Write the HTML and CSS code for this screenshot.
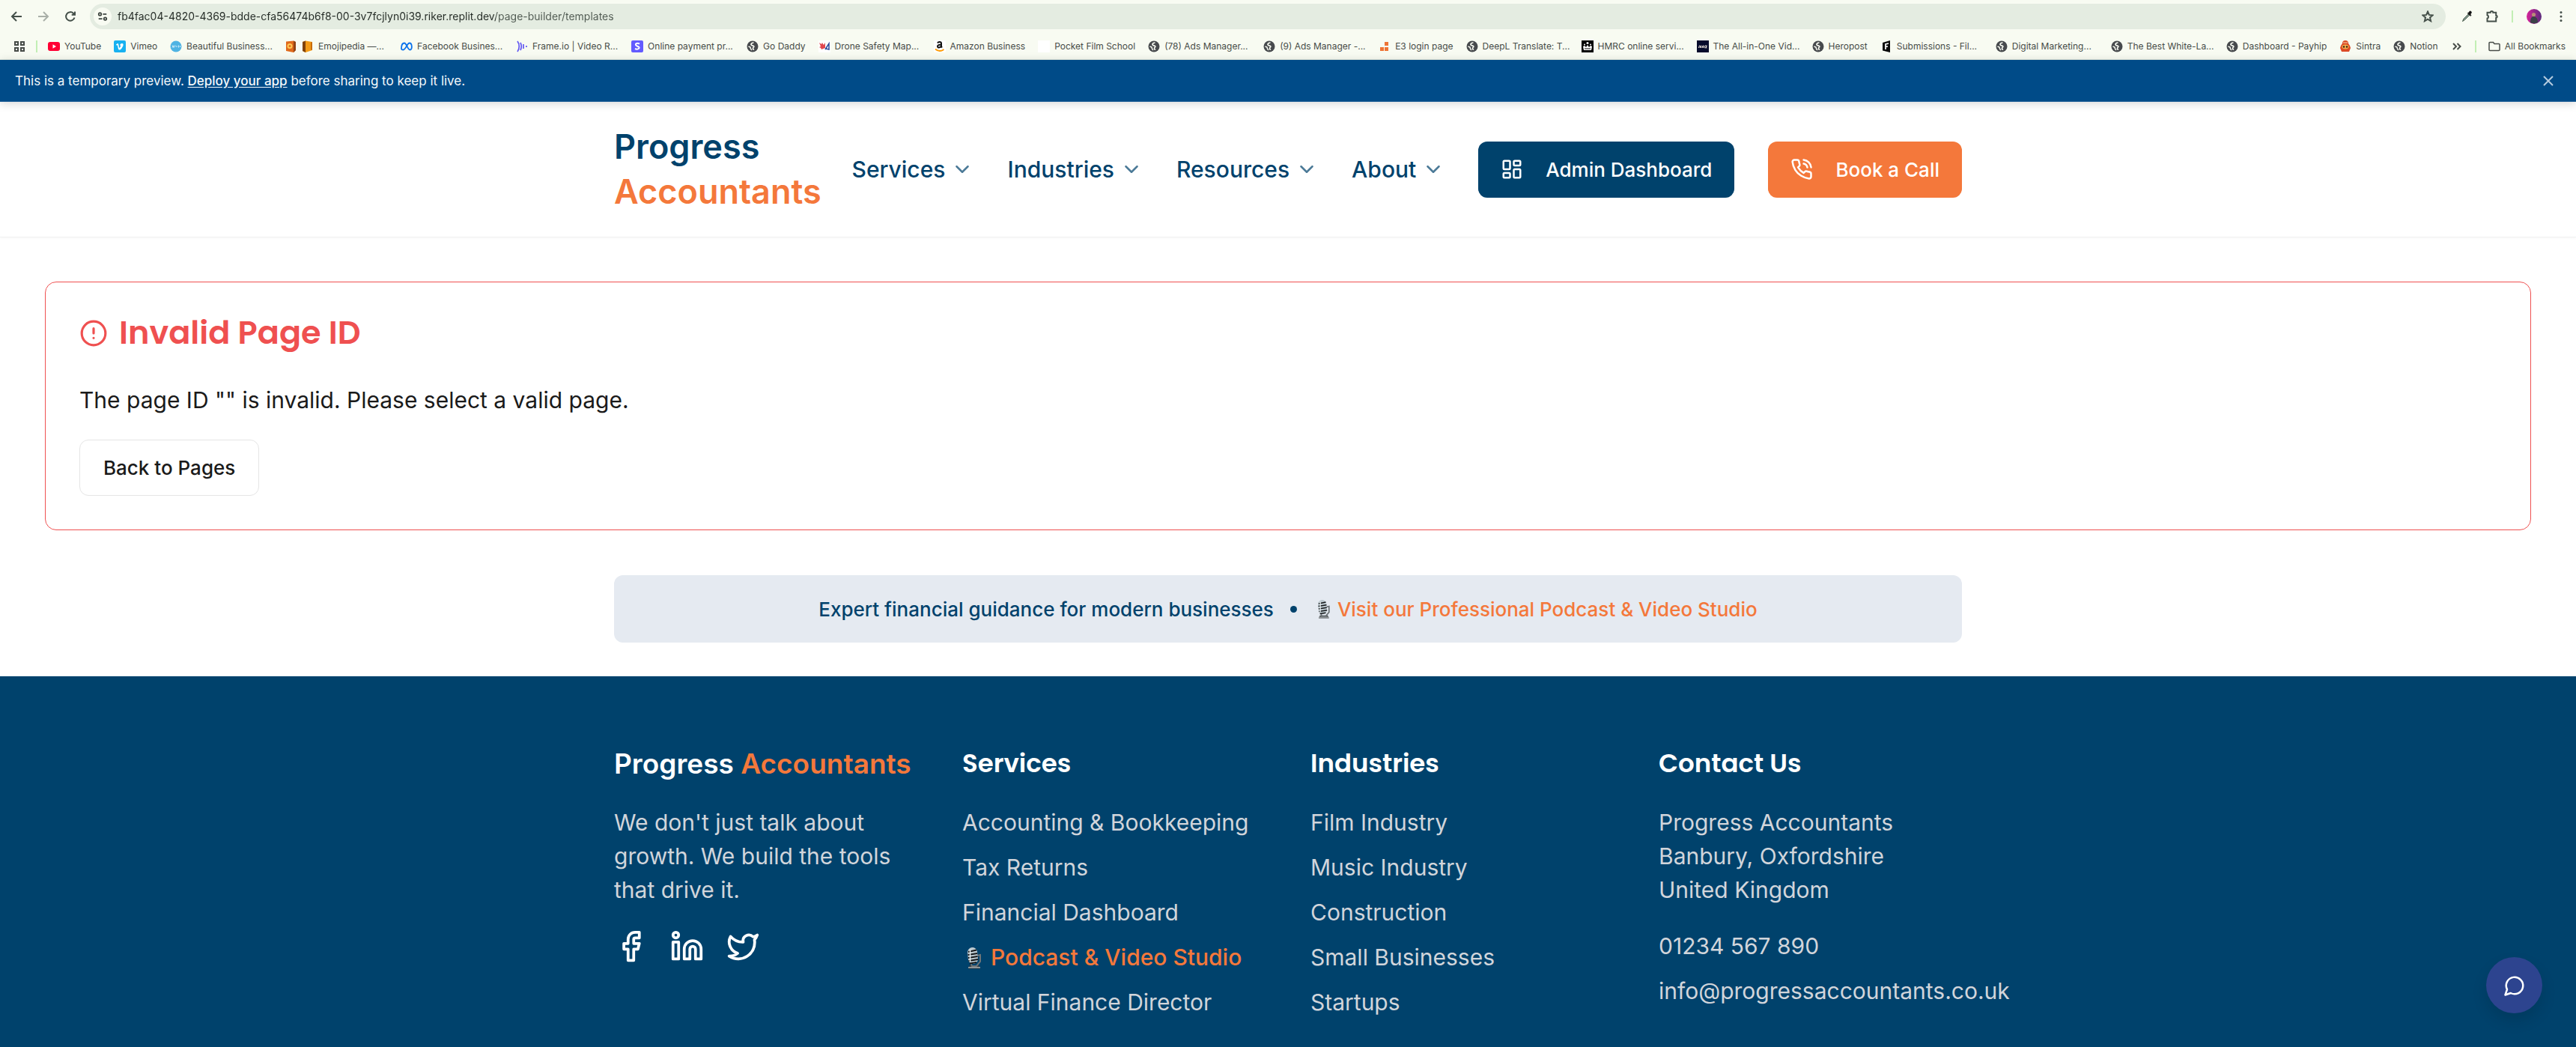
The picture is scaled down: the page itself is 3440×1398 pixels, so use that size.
FILE: index.html
```html
<!DOCTYPE html>
<html lang="en">
<head>
<meta charset="utf-8">
<title>Progress Accountants</title>
<link rel="stylesheet" href="styles.css">
</head>
<body>
<svg class="defs" aria-hidden="true">
  <symbol id="globe" viewBox="0 0 16 16"><circle cx="8" cy="8" r="7.5" fill="#474a4d"/><path d="M9.500 3C7.500 3 5.800 4 6 5.600s3.600.8 3.800 2.200-1.300 1.300-1.300 2.600.5 2 1.500 1.400" fill="none" stroke="#f8fbf2" stroke-width="1.700"/><path d="M2.500 8l2.500 1 .6 2.500L7 13" fill="none" stroke="#f8fbf2" stroke-width="1.500"/></symbol>
  <symbol id="chevron" viewBox="0 0 24 24"><path d="m6 9 6 6 6-6"/></symbol>
  <symbol id="mic" viewBox="0 0 30 30"><path d="M10 25h12l2 4.500H8z" fill="#3b3f42"/><path d="M8 27.800h16" stroke="#a8adb0" stroke-width="1.500"/><path d="M20 12l4-1v9l-5 6h-6l-2-5" fill="none" stroke="#6d7478" stroke-width="2"/><rect x="7.500" y="1" width="13" height="22" rx="6.500" transform="rotate(-6 14 12)" fill="#bcc9d0"/><path d="M8 7l11-2.500M7.600 11l12.500-2M8 15l12.500-2M8.500 19l12.500-2M10 22.500l9-1.500" stroke="#16191b" stroke-width="1.800"/><path d="M10.500 4v16" stroke="#eef4f6" stroke-width="1.500"/></symbol>
</svg>

<div class="browser">
  <div class="toolbar">
    <button class="tool" aria-label="Back"><svg viewBox="0 0 16 16"><path d="M15 8H2M8 2L2 8l6 6"/></svg></button>
    <button class="tool faded" aria-label="Forward"><svg viewBox="0 0 16 16"><path d="M1 8h13M8 2l6 6-6 6"/></svg></button>
    <button class="tool" aria-label="Reload"><svg viewBox="0 0 16 16"><path d="M13.500 9.500A5.800 5.800 0 1 1 12 3.800L13.500 5.300M14 1.500v4.300H9.700"/></svg></button>
    <div class="address">
      <button class="site" aria-label="Site information"><svg viewBox="0 0 16 16"><circle cx="4" cy="4.500" r="2"/><path d="M8.500 4.500H14M2 11.500h5.500"/><circle cx="12" cy="11.500" r="2"/></svg></button>
      <input class="url" aria-label="Address" value="fb4fac04-4820-4369-bdde-cfa56474b6f8-00-3v7fcjlyn0i39.riker.replit.dev/page-builder/templates">
      <button class="tool" aria-label="Bookmark this page"><svg viewBox="0 0 16 16"><path d="M8 1.500l1.900 4.400 4.700.4-3.600 3.100 1.100 4.700L8 11.600l-4.100 2.500L5 9.400 1.400 6.300l4.700-.4z"/></svg></button>
    </div>
    <div class="actions">
      <button class="tool" aria-label="Colour picker"><svg viewBox="0 0 16 16"><path d="M2.500 14.500L4 11l6-6 1.500 1.500-6 6z" fill="#8aa197" stroke="#4c5d4e" stroke-width="1"/><path d="M9 3.500l4 4 1-1-1-1.500 1.500-2a1.800 1.800 0 0 0-2.500-2L10.500 3z" fill="#111" stroke="#111" stroke-width=".5"/></svg></button>
      <button class="tool" aria-label="Extensions"><svg viewBox="0 0 16 16"><path d="M1.500 2.800h4.200a1.800 1.800 0 0 1 3.600 0h3.900v4a1.500 1.500 0 0 1 0 3v4.700H1.500v-4a2.200 2.200 0 0 0 0-4.200z"/></svg></button>
      <span class="rule"></span>
      <button class="tool" aria-label="Profile"><svg class="avatar" viewBox="0 0 20 20"><defs><linearGradient id="av" x1="0" x2="1"><stop offset="0" stop-color="#d6249a"/><stop offset="1" stop-color="#5a2a7c"/></linearGradient></defs><circle cx="10" cy="10" r="10" fill="url(#av)" stroke="none"/><path d="M5 18c0-6 2-8 4.500-8s5.500 2 5.500 7.800a10 10 0 0 1-10 .2z" fill="#3b4148" stroke="none"/><circle cx="9.500" cy="7.500" r="2.600" fill="#b98a78" stroke="none"/></svg></button>
      <button class="tool" aria-label="Menu"><svg viewBox="0 0 16 16"><g fill="#45504a" stroke="none"><circle cx="8" cy="2.500" r="1.500"/><circle cx="8" cy="8" r="1.500"/><circle cx="8" cy="13.500" r="1.500"/></g></svg></button>
    </div>
  </div>
  <nav class="bookmarks" aria-label="Bookmarks">
    <button class="apps" aria-label="Apps"><svg viewBox="0 0 16 16"><path d="M2 2h4v4H2zM10 2h4v4h-4zM2 10h4v4H2zM10 10h4v4h-4z"/></svg></button>
    <span class="rule"></span>
    <div class="marks">
      <a href="#"><svg viewBox="0 0 16 16"><rect y="2" width="16" height="12" rx="3" fill="#ff0033"/><path d="M6.500 5.300v5.400L11 8z" fill="#fff"/></svg>YouTube</a>
      <a href="#"><svg viewBox="0 0 16 16"><rect width="16" height="16" rx="2" fill="#17b1f0"/><path d="M3 5.500l2-1.500c1.500 0 1.300 2 2 5.200.5 1.500 1 .5 2-1.500.4-1.200-.2-1.400-1-1.200.5-2 2-2.700 3.200-2.500 2.500.5 1.200 4-.5 6.200-1.500 2-3.500 3.300-4.500 1.500C5.500 10 5.300 6.500 4.500 6.300l-1 .3z" fill="#fff"/></svg>Vimeo</a>
      <a href="#" class="wide"><svg viewBox="0 0 16 16"><circle cx="8" cy="8" r="7.500" fill="#4fb3e3"/><path d="M3 6.500l2 3 2-3M7.500 8h2.500M3 9.500l2-3M11.500 6.500v3M13.500 7v2" stroke="#d5eefa" fill="none"/></svg>Beautiful Business...</a>
      <a href="#" class="wide"><svg viewBox="0 0 16 16"><path d="M1 1.500L11 .5l3 1.500v11l-3 3-10-2z" fill="#e06a1c"/><path d="M11 .5l3 1.500v11l-3 3z" fill="#934414"/><circle cx="6" cy="7.500" r="3.500" fill="#ffca55"/><circle cx="6" cy="7.500" r="1.500" fill="#e06a1c"/></svg><svg viewBox="0 0 16 16"><path d="M1 2l4-1.500 9 1.500v11l-9 3-4-2z" fill="#f39a16"/><path d="M1 2l4-1.500V16l-4-2z" fill="#80420a"/><path d="M12 2.500v10l2 .5V2z" fill="#c76b0b"/></svg>Emojipedia —...</a>
      <a href="#" class="wide"><svg viewBox="0 0 16 16"><path d="M1 11C1 6 3 3.500 5 3.500c3 0 4 9 7.500 9 3.500 0 3-9-.7-9C8.500 3.500 7 12.500 3.500 12.500 2 12.500 1 12 1 11z" fill="none" stroke="#0a72ec" stroke-width="1.800"/></svg>Facebook Busines...</a>
      <a href="#" class="wide"><svg viewBox="0 0 16 16"><path d="M2 1c3 4 3 10 0 14M6 3c1.500 3 1.500 7 0 10M10 5v6M14 7v2" fill="none" stroke="#6257f2" stroke-width="1.700"/></svg>Frame.io | Video R...</a>
      <a href="#" class="wide"><svg viewBox="0 0 16 16"><rect width="16" height="16" rx="2" fill="#635bff"/><path d="M11 4.500C8 3 5.500 4 6 6s5 1.500 4.600 4C10 12 7 12 5 11" fill="none" stroke="#fff" stroke-width="2"/></svg>Online payment pr...</a>
      <a href="#"><svg><use href="#globe"/></svg>Go Daddy</a>
      <a href="#" class="wide"><svg viewBox="0 0 16 16"><path d="M0 0h16v16H0z" fill="#fff"/><path d="M1 3l3 2 1-2 2 3 2-3v7l-5 2-1-2-2-1 2-1z" fill="#e0474f"/><path d="M9 12l5-8v8l-4-1" fill="none" stroke="#28499c" stroke-width="1.500"/></svg>Drone Safety Map...</a>
      <a href="#"><svg viewBox="0 0 16 16"><rect width="16" height="16" rx="2" fill="#fff"/><path d="M5 3.500C6 1.500 10 1.500 10 4v4l1 1.500M10 5.500c-3 0-5 .5-5 2.500s3.500 2 5-.5" fill="none" stroke="#111" stroke-width="2"/><path d="M2 11.500c4 3.500 8 3 11.500.5" fill="none" stroke="#ff9900" stroke-width="1.800"/></svg>Amazon Business</a>
      <a href="#"><svg viewBox="0 0 16 16"><path d="M0 0h16v16H0z" fill="#fff"/></svg>Pocket Film School</a>
      <a href="#" class="wide"><svg><use href="#globe"/></svg>(78) Ads Manager...</a>
      <a href="#" class="wide"><svg><use href="#globe"/></svg>(9) Ads Manager -...</a>
      <a href="#"><svg viewBox="0 0 16 16"><path d="M8 2h5v5H8zM2 9h5v5H2zM8 9h5v5H8z" fill="#ee7435"/></svg>E3 login page</a>
      <a href="#" class="wide"><svg><use href="#globe"/></svg>DeepL Translate: T...</a>
      <a href="#" class="wide"><svg viewBox="0 0 16 16"><path d="M0 0h16v16H0z"/><path d="M3 13l-1-5 2-1 2 2 2-3 2 3 2-2 2 1-1 5z" fill="#fff"/><circle cx="8" cy="3.500" r="1.500" fill="#fff"/><circle cx="4" cy="5.500" r="1" fill="#fff"/><circle cx="12" cy="5.500" r="1" fill="#fff"/><path d="M4 11h8" stroke="#000"/></svg>HMRC online servi...</a>
      <a href="#" class="wide"><svg viewBox="0 0 16 16"><path d="M0 0h16v16H0z" fill="#070b2b"/><path d="M2.500 10L3.500 6.500M4 10l1-3 1 .3L5.500 10M7 10l1-3h1l-.5 3M12.500 7h-1.500l-1 1.500.3 1.300H12l1-3-.6 3.200h1" fill="none" stroke="#e5dcd5"/></svg>The All-in-One Vid...</a>
      <a href="#"><svg><use href="#globe"/></svg>Heropost</a>
      <a href="#" class="wide"><svg viewBox="0 0 16 16"><path d="M3 3l10-3v16L3 13.500z" fill="#0a0a0a"/><path d="M7 12V5l4-1M7 8.500l3-.5" fill="none" stroke="#fff" stroke-width="1.700"/></svg>Submissions - Fil...</a>
      <a href="#" class="wide"><svg><use href="#globe"/></svg>Digital Marketing...</a>
      <a href="#" class="wide"><svg><use href="#globe"/></svg>The Best White-La...</a>
      <a href="#"><svg><use href="#globe"/></svg>Dashboard - Payhip</a>
      <a href="#"><svg viewBox="0 0 16 16"><path d="M4 4a4 4 0 0 1 8 0l2 3 1 3-2 5H3L1 10l1-3z" fill="#dc4a25"/><path d="M5 3h6" stroke="#f6d9b0"/><ellipse cx="8" cy="8.500" rx="4.500" ry="3" fill="#f2ae4c"/><circle cx="6" cy="8.500" r="1.200" fill="#3a1b10"/><circle cx="10" cy="8.500" r="1.200" fill="#3a1b10"/></svg>Sintra</a>
      <a href="#"><svg><use href="#globe"/></svg>Notion</a>
    </div>
    <button class="more" aria-label="More bookmarks"><svg viewBox="0 0 16 16"><path d="M3 4l4 4-4 4M8.500 4l4 4-4 4"/></svg></button>
    <span class="rule"></span>
    <a href="#" class="all"><svg viewBox="0 0 16 16"><path d="M1 3.500a1 1 0 0 1 1-1h4.500l1.500 2h6a1 1 0 0 1 1 1v7a1 1 0 0 1-1 1H2a1 1 0 0 1-1-1z" fill="none" stroke="#474c48" stroke-width="1.500"/></svg>All Bookmarks</a>
  </nav>
</div>

<div class="preview">
  <p>This is a temporary preview. <a href="#">Deploy your app</a> before sharing to keep it live.</p>
  <button aria-label="Dismiss"><svg viewBox="0 0 24 24"><path d="M6 6l12 12M18 6L6 18"/></svg></button>
</div>

<header class="header">
  <div class="container header-row">
    <a href="#" class="logo">Progress <span>Accountants</span></a>
    <nav class="menu">
      <button class="menu-item">Services <svg class="icon"><use href="#chevron"/></svg></button>
      <button class="menu-item">Industries <svg class="icon"><use href="#chevron"/></svg></button>
      <button class="menu-item">Resources <svg class="icon"><use href="#chevron"/></svg></button>
      <button class="menu-item">About <svg class="icon"><use href="#chevron"/></svg></button>
      <a href="#" class="btn navy"><svg class="icon" viewBox="0 0 24 24"><rect x="3" y="3" width="7" height="9" rx="1"/><rect x="14" y="3" width="7" height="5" rx="1"/><rect x="14" y="12" width="7" height="9" rx="1"/><rect x="3" y="16" width="7" height="5" rx="1"/></svg>Admin Dashboard</a>
      <a href="#" class="btn orange"><svg class="icon" viewBox="0 0 24 24"><path d="M22 16.920v3a2 2 0 0 1-2.180 2 19.790 19.790 0 0 1-8.630-3.070 19.500 19.500 0 0 1-6-6 19.790 19.790 0 0 1-3.070-8.670A2 2 0 0 1 4.110 2h3a2 2 0 0 1 2 1.720 12.840 12.840 0 0 0 .7 2.810 2 2 0 0 1-.45 2.110L8.090 9.910a16 16 0 0 0 6 6l1.270-1.270a2 2 0 0 1 2.110-.45 12.840 12.840 0 0 0 2.810.7A2 2 0 0 1 22 16.920z"/><path d="M14.050 2a9 9 0 0 1 8 7.940"/><path d="M14.050 6A5 5 0 0 1 18 10"/></svg>Book a Call</a>
    </nav>
  </div>
</header>

<main class="main">
  <section class="card">
    <h1><svg viewBox="0 0 24 24"><circle cx="12" cy="12" r="10"/><path d="M12 8v4M12 16h.01"/></svg>Invalid Page ID</h1>
    <p>The page ID "" is invalid. Please select a valid page.</p>
    <button class="back">Back to Pages</button>
  </section>
</main>

<div class="container guide">
  <span>Expert financial guidance for modern businesses</span>
  <span class="dot"></span>
  <a href="#"><svg class="mic"><use href="#mic"/></svg>Visit our Professional Podcast &amp; Video Studio</a>
</div>

<footer class="footer">
  <div class="container columns">
    <div>
      <div class="brand">Progress <span>Accountants</span></div>
      <p>We don't just talk about growth. We build the tools that drive it.</p>
      <div class="social">
        <a href="#" aria-label="Facebook"><svg viewBox="0 0 24 24"><path d="M18 2h-3a5 5 0 0 0-5 5v3H7v4h3v8h4v-8h3l1-4h-4V7a1 1 0 0 1 1-1h3z"/></svg></a>
        <a href="#" aria-label="LinkedIn"><svg viewBox="0 0 24 24"><path d="M16 8a6 6 0 0 1 6 6v7h-4v-7a2 2 0 0 0-2-2 2 2 0 0 0-2 2v7h-4v-7a6 6 0 0 1 6-6z"/><rect width="4" height="12" x="2" y="9"/><circle cx="4" cy="4" r="2"/></svg></a>
        <a href="#" aria-label="Twitter"><svg viewBox="0 0 24 24"><path d="M22 4s-.7 2.100-2 3.400c1.600 10-9.400 17.300-18 11.600 2.200.1 4.400-.6 6-2C3 15.500.5 9.600 3 5c2.200 2.600 5.600 4.100 9 4-.9-4.200 4-6.600 7-3.800 1.100 0 3-1.200 3-1.200z"/></svg></a>
      </div>
    </div>
    <div>
      <h2>Services</h2>
      <ul>
        <li><a href="#">Accounting &amp; Bookkeeping</a></li>
        <li><a href="#">Tax Returns</a></li>
        <li><a href="#">Financial Dashboard</a></li>
        <li><a href="#" class="hot"><svg class="mic big"><use href="#mic"/></svg>Podcast &amp; Video Studio</a></li>
        <li><a href="#">Virtual Finance Director</a></li>
      </ul>
    </div>
    <div>
      <h2>Industries</h2>
      <ul>
        <li><a href="#">Film Industry</a></li>
        <li><a href="#">Music Industry</a></li>
        <li><a href="#">Construction</a></li>
        <li><a href="#">Small Businesses</a></li>
        <li><a href="#">Startups</a></li>
      </ul>
    </div>
    <div>
      <h2>Contact Us</h2>
      <address>
        <p>Progress Accountants<br>Banbury, Oxfordshire<br>United Kingdom</p>
        <a href="#" class="phone">01234 567 890</a>
        <a href="#">info@progressaccountants.co.uk</a>
      </address>
    </div>
  </div>
</footer>

<button class="chat" aria-label="Open chat"><svg class="icon" viewBox="0 0 24 24"><path d="M7.900 20A9 9 0 1 0 4 16.100L2 22Z"/></svg></button>
</body>
</html>
```

FILE: styles.css
```css
:root {
  --navy: #00426c;
  --orange: #f4783b;
  --green: #c2efb4;
}

* { box-sizing: border-box; }

body {
  margin: 0;
  min-height: 100vh;
  display: flex;
  flex-direction: column;
  background: #fff;
  color: #1a1a1a;
  font: 30px/45px Inter, "Liberation Sans", sans-serif;
}

h1, h2, p, ul { margin: 0; padding: 0; }
ul { list-style: none; }
a { color: inherit; text-decoration: none; }
button { margin: 0; padding: 0; border: 0; background: none; color: inherit; font: inherit; }
svg { display: block; flex: none; }
.defs { position: absolute; width: 0; height: 0; }

.icon {
  width: 30px;
  height: 30px;
  fill: none;
  stroke: currentColor;
  stroke-width: 2;
  stroke-linecap: round;
  stroke-linejoin: round;
}

/* Browser chrome */
.browser {
  background: #f8fbf2;
  border-bottom: 1px solid #dfe6db;
  color: #474c48;
  font-size: 12px;
  line-height: 16px;
}
.toolbar {
  display: flex;
  align-items: center;
  height: 44px;
  padding: 0 12px 0 14px;
}
.tool svg {
  width: 16px;
  height: 16px;
  fill: none;
  stroke: #45504a;
  stroke-width: 2;
}
.toolbar > .tool { margin-right: 20px; }
.toolbar > .faded svg { stroke: #a9afa8; }
.address {
  flex: 1;
  display: flex;
  align-items: center;
  height: 34px;
  margin-left: -2px;
  padding: 0 16px 0 5px;
  border-radius: 17px;
  background: #e4ece1;
}
.site {
  display: grid;
  place-items: center;
  width: 24px;
  height: 24px;
  border-radius: 50%;
  background: #f8fbf2;
}
.site svg { width: 14px; height: 14px; fill: none; stroke: #3d4540; stroke-width: 2; }
.url {
  flex: 1;
  min-width: 0;
  margin-left: 8px;
  padding: 0;
  border: 0;
  outline: 0;
  font: 14px/20px Inter, sans-serif;
  color: transparent;
  background: linear-gradient(90deg, #232a25 505px, #505a52 505px);
  -webkit-background-clip: text;
  background-clip: text;
}
.actions { display: flex; align-items: center; gap: 18px; margin-left: 20px; }
.rule { width: 2px; height: 16px; background: var(--green); }
.tool .avatar { width: 20px; height: 20px; }

.bookmarks {
  display: flex;
  align-items: center;
  height: 35px;
  padding: 0 14px 0 18px;
}
.apps { margin-right: 14px; }
.apps svg, .more svg { width: 16px; height: 16px; fill: none; stroke: #474c48; stroke-width: 2; }
.marks { flex: 1; display: flex; gap: 17px; margin-left: 14px; }
.marks a, .all { display: flex; align-items: center; gap: 6px; white-space: nowrap; }
.marks svg, .all svg { width: 16px; height: 16px; }
.marks .wide { width: 137px; }
.more { margin-right: 16px; }
.all { margin-left: 16px; }

/* Preview banner */
.preview {
  position: relative;
  display: flex;
  align-items: center;
  justify-content: space-between;
  height: 56px;
  padding: 0 25px 0 20px;
  border-bottom: 1px solid #1f5f97;
  background: #004b88;
  box-shadow: 0 2px 12px rgba(0, 0, 0, .16);
  color: #f4f8fb;
  font-size: 17px;
  line-height: 24px;
}
.preview a { font-weight: 500; text-decoration: underline; text-underline-offset: 2px; }
.preview svg { width: 24px; height: 24px; stroke: #b5cbdf; stroke-width: 2; }

/* Site header */
.container { width: calc(100% - 120px); max-width: 1800px; margin: 0 auto; }
.header { padding: 30px 0; border-bottom: 1px solid #f0f1f2; box-shadow: 0 1px 3px rgba(0, 0, 0, .04); }
.header-row { display: flex; align-items: center; justify-content: space-between; }
.logo {
  display: flex;
  flex-direction: column;
  color: var(--navy);
  font-size: 45px;
  font-weight: 600;
  line-height: 60px;
}
.logo span, .brand span { color: var(--orange); }
.menu { display: flex; align-items: center; gap: 45px; }
.menu-item { display: flex; align-items: center; gap: 8px; color: var(--navy); font-weight: 500; }
.menu-item .icon { opacity: .7; }
.btn {
  display: flex;
  align-items: center;
  gap: 30px;
  height: 75px;
  padding: 0 30px;
  border-radius: 12px;
  color: #fff;
  font-size: 26px;
  font-weight: 500;
}
.navy { background: var(--navy); }
.orange { background: var(--orange); }

/* Error card */
.main { padding: 59px 60px 60px; }
.card { padding: 45px; border: 1px solid #ef5050; border-radius: 15px; }
.card h1 {
  display: flex;
  align-items: center;
  gap: 15px;
  margin-bottom: 45px;
  color: #ef5050;
  font: 600 43px/45px Poppins, Inter, sans-serif;
}
.card h1 svg {
  width: 38px;
  height: 38px;
  fill: none;
  stroke: currentColor;
  stroke-width: 2;
  stroke-linecap: round;
}
.back {
  height: 75px;
  margin-top: 30px;
  padding: 0 31px;
  border: 1px solid #e5e5e5;
  border-radius: 12px;
  font-size: 26px;
  font-weight: 500;
}

/* Guidance strip */
.guide {
  display: flex;
  align-items: center;
  justify-content: center;
  gap: 22px;
  min-height: 90px;
  margin-bottom: 45px;
  border-radius: 12px;
  background: #e5eaf1;
  color: var(--navy);
  font-size: 26px;
  font-weight: 500;
}
.guide a { display: flex; align-items: center; gap: 6px; color: var(--orange); }
.dot { width: 9px; height: 9px; border-radius: 50%; background: var(--navy); }
.mic { width: 26px; height: 26px; }
.mic.big { width: 30px; height: 30px; }

/* Footer */
.footer { flex: 1; padding: 90px 0 30px; background: var(--navy); color: #d1d5db; }
.columns { display: grid; grid-template-columns: repeat(4, 1fr); gap: 60px; }
.columns > div { min-width: 0; }
.brand, .footer h2 {
  margin-bottom: 30px;
  color: #fff;
  font-weight: 600;
  line-height: 53px;
}
.brand { font-size: 37px; white-space: nowrap; }
.footer h2 { font-family: Poppins, Inter, sans-serif; font-size: 34px; }
.footer ul { display: flex; flex-direction: column; gap: 15px; }
.hot { display: flex; align-items: center; gap: 8px; color: var(--orange); font-weight: 500; }
.social { display: flex; gap: 30px; margin-top: 30px; }
.social svg {
  width: 45px;
  height: 45px;
  fill: none;
  stroke: #fff;
  stroke-width: 2;
  stroke-linecap: round;
  stroke-linejoin: round;
}
address { display: flex; flex-direction: column; gap: 15px; font-style: normal; white-space: nowrap; }
.phone { margin-top: 15px; }

/* Chat launcher */
.chat {
  position: fixed;
  right: 45px;
  bottom: 45px;
  display: grid;
  place-items: center;
  width: 75px;
  height: 75px;
  border-radius: 50%;
  background: #2d448f;
  box-shadow: 0 10px 20px rgba(0, 0, 0, .12);
  color: #fff;
}
```
